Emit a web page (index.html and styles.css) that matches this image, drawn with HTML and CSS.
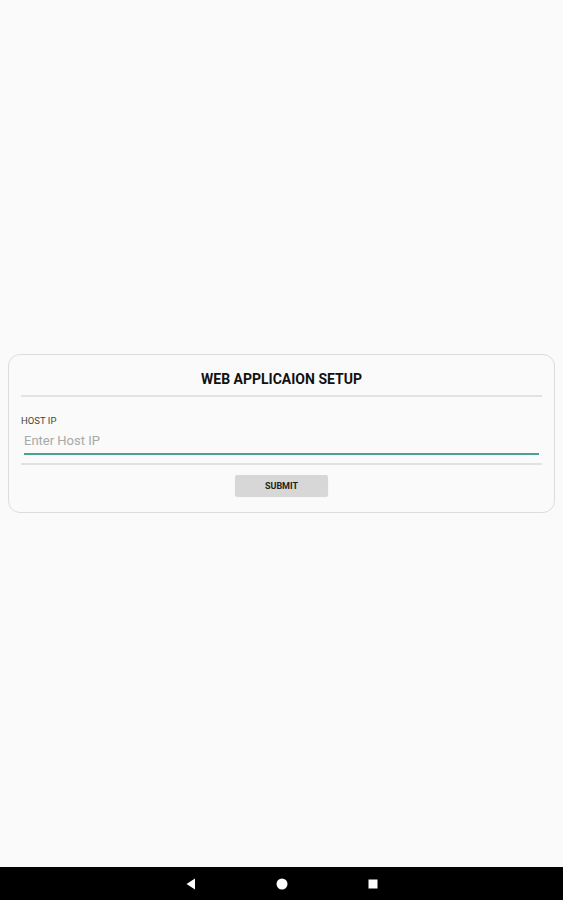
FILE: index.html
```html
<!DOCTYPE html>
<html lang="en">
<head>
  <meta charset="UTF-8" />
  <meta name="viewport" content="width=device-width, initial-scale=1.0" />
  <title>Web Application Setup</title>
  <link rel="stylesheet" href="styles.css">
</head>
<body>
  <div class="screen">
    <div class="card">
      <h1 class="title">WEB APPLICAION SETUP</h1>
      <hr class="divider" />
      <label class="label" for="host-ip">HOST IP</label>
      <input class="field" id="host-ip" type="text" placeholder="Enter Host IP" />
      <hr class="divider gap" />
      <button class="submit">SUBMIT</button>
    </div>
  </div>
  <div class="navbar">
    <svg width="10" height="12" viewBox="0 0 10 12"><path d="M9 0.5 L9 11.5 L0.5 6 Z" fill="#fff"/></svg>
    <svg width="12" height="12" viewBox="0 0 12 12"><circle cx="6" cy="6" r="5.5" fill="#fff"/></svg>
    <svg width="10" height="10" viewBox="0 0 10 10"><rect x="0.5" y="0.5" width="9" height="9" fill="#fff"/></svg>
  </div>
</body>
</html>
```

FILE: styles.css
```css
body {
  margin: 0;
  padding: 0;
  background-color: #fafafa;
  font-family: Roboto, "Liberation Sans", sans-serif;
  height: 900px;
  display: flex;
  flex-direction: column;
}
.screen {
  flex: 1;
  display: flex;
  align-items: center;
  padding: 0 8px;
}
.card {
  flex: 1;
  display: flex;
  flex-direction: column;
  border: 1px solid #dcdcdc;
  border-radius: 12px;
  padding: 12px 12px 16px;
}
.title {
  margin: 0 0 4px;
  font-size: 14px;
  line-height: 24px;
  font-weight: bold;
  text-align: center;
  color: #111;
}
.divider {
  width: 100%;
  margin: 0;
  border: none;
  border-top: 2px solid #e2e2e2;
}
.divider.gap {
  margin-top: 8px;
}
.label {
  margin: 18px 0 0;
  font-size: 9.5px;
  line-height: 12px;
  color: #444;
}
.field {
  margin: 2px 3px 0;
  padding: 0 0 2px;
  height: 22px;
  border: none;
  border-bottom: 2px solid #4aa391;
  background: transparent;
  font-family: inherit;
  font-size: 13px;
  color: #333;
  outline: none;
  caret-color: #4aa391;
}
.field::placeholder {
  color: #a8a8a8;
}
.submit {
  align-self: center;
  margin-top: 10px;
  width: 93px;
  height: 21px;
  border: none;
  border-radius: 2px;
  background-color: #d7d7d7;
  box-shadow: 0 1px 1px rgba(0, 0, 0, 0.15);
  font-family: inherit;
  font-size: 9px;
  font-weight: bold;
  color: #222;
}
.navbar {
  height: 33px;
  background-color: #000;
  display: flex;
  align-items: center;
  justify-content: center;
  gap: 80px;
}
```
